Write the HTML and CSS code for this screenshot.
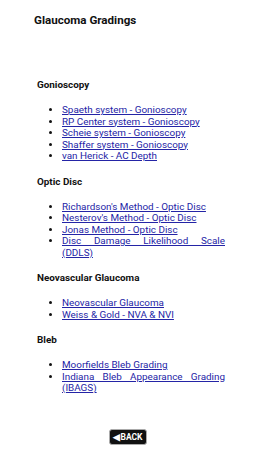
FILE: index.html
```html
<!DOCTYPE html>
<html>
<head>
<meta charset="utf-8">
<link rel="stylesheet" href="styles.css">
</head>
<body>
<header class="header"><h1 class="title">Glaucoma Gradings</h1></header>
<main class="content">
  <section class="group">
    <h2 class="group-title">Gonioscopy</h2>
    <ul class="links">
      <li><a href="#">Spaeth system - Gonioscopy</a></li>
      <li><a href="#">RP Center system - Gonioscopy</a></li>
      <li><a href="#">Scheie system - Gonioscopy</a></li>
      <li><a href="#">Shaffer system - Gonioscopy</a></li>
      <li><a href="#">van Herick - AC Depth</a></li>
    </ul>
  </section>
  <section class="group">
    <h2 class="group-title">Optic Disc</h2>
    <ul class="links">
      <li><a href="#">Richardson's Method - Optic Disc</a></li>
      <li><a href="#">Nesterov's Method - Optic Disc</a></li>
      <li><a href="#">Jonas Method - Optic Disc</a></li>
      <li><a href="#">Disc Damage Likelihood Scale (DDLS)</a></li>
    </ul>
  </section>
  <section class="group">
    <h2 class="group-title">Neovascular Glaucoma</h2>
    <ul class="links">
      <li><a href="#">Neovascular Glaucoma</a></li>
      <li><a href="#">Weiss &amp; Gold - NVA &amp; NVI</a></li>
    </ul>
  </section>
  <section class="group">
    <h2 class="group-title">Bleb</h2>
    <ul class="links">
      <li><a href="#">Moorfields Bleb Grading</a></li>
      <li><a href="#">Indiana Bleb Appearance Grading (IBAGS)</a></li>
    </ul>
  </section>
</main>
<footer class="footer"><a class="back" href="#">&#9664;BACK</a></footer>
</body>
</html>
```
FILE: styles.css
```css
html {
  overflow: hidden;
}
html, body {
  margin: 0;
  padding: 0;
  background: #fff;
}
body {
  width: 256px;
  font-family: Roboto, "Liberation Sans", sans-serif;
  color: #111;
}
.header {
  box-sizing: border-box;
  height: 78px;
  padding: 13px 0 0 34px;
}
.title {
  margin: 0;
  font-size: 11.6px;
  font-weight: 700;
  line-height: 15px;
}
.content {
  padding: 0 31px 0 37px;
}
.group {
  margin-bottom: 13px;
}
.group-title {
  margin: 0 0 12px;
  font-size: 9.9px;
  font-weight: 700;
  line-height: 14px;
}
.links {
  margin: 0;
  padding-left: 25px;
  font-size: 9.9px;
  line-height: 11.5px;
  text-align: justify;
}
.links a {
  color: #2424a6;
}
.footer {
  display: flex;
  justify-content: center;
  padding-top: 22px;
}
.back {
  display: block;
  box-sizing: border-box;
  width: 38px;
  height: 16px;
  background: #111;
  color: #fff;
  font-size: 8.5px;
  font-weight: 700;
  text-align: center;
  text-decoration: none;
  border-radius: 3px;
  border: 1px solid #aaa;
  line-height: 14px;
}
```
